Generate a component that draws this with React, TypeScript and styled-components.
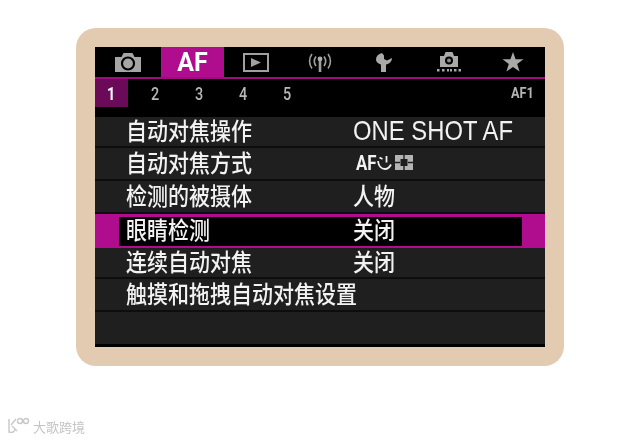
import React from "react";
import styled, { createGlobalStyle } from "styled-components";

const Global = createGlobalStyle`
  html, body { margin: 0; padding: 0; background: #fff; }
  body { width: 640px; height: 440px; overflow: hidden; font-family: "Noto Sans CJK SC", "Noto Sans", sans-serif; }
`;
const Page = styled.div`
  position: relative;
  width: 640px;
  height: 440px;
  padding: 28px 76px 0;
  box-sizing: border-box;
`;
const Card = styled.div`
  width: 488px;
  height: 338px;
  padding: 19px;
  box-sizing: border-box;
  background: #e2cbb0;
  border-radius: 20px;
`;
const Screen = styled.div`
  width: 450px;
  height: 300px;
  background: #000;
  display: flex;
  flex-direction: column;
  filter: blur(0.45px);
`;
const Tabs = styled.div`
  display: grid;
  grid-template-columns: 66px 63px 64px 64px 64px 65px 64px;
  height: 30px;
  flex: none;
`;
const Tab = styled.div<{ $active?: boolean }>`
  display: flex;
  align-items: center;
  justify-content: center;
  background: ${(p) => (p.$active ? "#b00d8e" : "transparent")};
  color: #fff;
  font: 700 25px "Roboto", sans-serif;
`;
const Rule = styled.div`
  height: 2px;
  flex: none;
  background: #a00c80;
`;
const SubBar = styled.div`
  display: flex;
  align-items: flex-start;
  height: 38px;
  flex: none;
  font: 700 18px "Roboto", sans-serif;
  color: #bdbdbd;
`;
const SubCell = styled.div<{ $active?: boolean }>`
  width: 44px;
  height: 28px;
  display: flex;
  align-items: center;
  justify-content: center;
  flex: none;
  background: ${(p) => (p.$active ? "#6a0a58" : "transparent")};
  color: ${(p) => (p.$active ? "#fff" : "#b8b8b8")};
  font-weight: ${(p) => (p.$active ? 700 : 500)};
  ${(p) => p.$active && "width: 33px; margin-right: 5px;"}
`;
const Digit = styled.span`
  display: inline-block;
  transform: scaleX(0.8);
`;
const SubTag = styled.div`
  margin-left: auto;
  margin-right: 11px;
  font: 700 15px/28px "Roboto", sans-serif;
  color: #b5b5b5;
  transform: scaleX(0.85);
  transform-origin: right center;
`;
const List = styled.div`
  flex: 1;
  display: flex;
  flex-direction: column;
`;
const Row = styled.div<{ $h: number; $selected?: boolean; $last?: boolean; $up?: number }>`
  height: ${(p) => p.$h}px;
  box-sizing: border-box;
  flex: none;
  display: flex;
  align-items: center;
  padding-left: 31px;
  padding-bottom: ${(p) => p.$up ?? 0}px;
  background: ${(p) => (p.$selected ? "#000" : "#1f1f1f")};
  border-bottom: ${(p) => (p.$selected || p.$last ? "none" : "2px solid #0d0d0d")};
  color: #f2f2f2;
  font-size: 24px;
  font-weight: 500;
  line-height: 0.95;
  ${(p) =>
    p.$selected &&
    `
    border: solid #b00d8e;
    border-width: 3px 23px 2px 24px;
    padding-left: 7px;
  `}
`;
const LabelSlot = styled.span`
  width: 227px;
  flex: none;
`;
const Squeezed = styled.span`
  display: inline-block;
  white-space: nowrap;
  transform: scaleX(0.875);
  transform-origin: left center;
`;
const Latin = styled(Squeezed)`
  font: 400 28px/1 "Liberation Sans", sans-serif;
  letter-spacing: 0.05px;
  transform: scaleX(0.85);
`;
const IconValue = styled.span`
  display: inline-flex;
  align-items: center;
`;
const AfText = styled.span`
  display: inline-block;
  width: 19px;
  margin-left: 3px;
  margin-right: 2px;
  font: 700 21px "Roboto", sans-serif;
  transform: scaleX(0.8);
  transform-origin: left center;
`;
const BottomFill = styled.div`
  flex: 1;
  background: #000;
`;
const Watermark = styled.div`
  position: absolute;
  left: 7px;
  top: 417px;
  display: flex;
  align-items: center;
  gap: 3px;
  color: #c4c4c4;
  font-size: 13px;
  line-height: 1;
  filter: blur(0.7px);
`;

const Camera = () => (
  <svg width="28" height="19" viewBox="0 0 28 19">
    <path fill="#a6a6a6" d="M1 4h6.500l2-4h9l2 4H27v15H1z" />
    <circle cx="14" cy="10.500" r="6" fill="none" stroke="#000" strokeWidth="2.200" />
  </svg>
);
const Play = () => (
  <svg width="26" height="20" viewBox="0 0 26 20">
    <rect x="1" y="2" width="24" height="17" fill="none" stroke="#a0a0a0" strokeWidth="2" />
    <path fill="#a0a0a0" d="M8 6l10 4.500-10 4.500z" />
  </svg>
);
const Wireless = () => (
  <svg width="24" height="19" viewBox="0 0 24 19" fill="none" stroke="#a0a0a0" strokeWidth="1.600">
    <path d="M8 3.500a8 8 0 0 0 0 9.500M4 1a12 12 0 0 0 0 14.500M16 3.500a8 8 0 0 1 0 9.500M20 1a12 12 0 0 1 0 14.500" />
    <circle cx="12" cy="6" r="2.400" fill="#b0b0b0" stroke="none" />
    <path d="M12 7v12" strokeWidth="2.600" />
  </svg>
);
const Wrench = () => (
  <svg width="16" height="19" viewBox="0 0 16 19">
    <path fill="#a9a9a9" d="M6 0C2 1 0 3.500 0 6.500 0 9 2.500 11 5 11.500V19h5v-7.500c3-.5 6-3 6-6.500l-5 2.500L8 6V2.500z" />
  </svg>
);
const CameraDots = () => (
  <svg width="24" height="20" viewBox="0 0 24 20">
    <path fill="#a9a9a9" d="M3 4h4l1.500-4h7L17 4h4v11H3z" />
    <circle cx="12" cy="8.500" r="4" fill="#000" />
    <circle cx="12" cy="8.500" r="2" fill="#8a8a8a" />
    <g fill="#a9a9a9">
      <rect x="0" y="17" width="2.500" height="2.500" />
      <rect x="5" y="17" width="2.500" height="2.500" />
      <rect x="10" y="17" width="2" height="2.500" />
      <rect x="13" y="17" width="2" height="2.500" />
      <rect x="17" y="17" width="2.500" height="2.500" />
      <rect x="21.500" y="17" width="2.500" height="2.500" />
    </g>
  </svg>
);
const Star = () => (
  <svg width="22" height="20" viewBox="0 0 22 20">
    <path fill="#a9a9a9" d="M11 0l2.600 7.300H21.500l-6.300 4.700 2.400 7.600L11 15l-6.600 4.600 2.400-7.600L.5 7.300h7.900z" />
  </svg>
);
const Face = () => (
  <svg width="15" height="15" viewBox="0 0 15 15" fill="none" stroke="#efefef" strokeWidth="1.800">
    <path d="M1 6c.5 5 3.500 8 7 8 2.500 0 4.500-1.500 6-4.500" />
    <path d="M2.500 2.500l3 1.500M9.500 1v6.500" />
  </svg>
);
const Tracking = () => (
  <svg width="18" height="15" viewBox="0 0 18 15" style={{ marginLeft: 3 }}>
    <rect x="0" y="0" width="18" height="15" fill="#b4b4b4" />
    <path fill="none" stroke="#1f1f1f" strokeWidth="1.400" d="M9 0v4M9 11v4M0 7.500h5M13 7.500h5" />
    <rect x="5.500" y="4" width="7" height="7" fill="#1f1f1f" />
  </svg>
);
const Logo = () => (
  <svg width="23" height="18" viewBox="0 0 23 18" fill="none" stroke="#c8c8c8" strokeWidth="1.400">
    <path d="M2 2v13c3 1 6 0 6-3M4 8l5-6M5 9l5 5" />
    <circle cx="13" cy="4" r="2.500" />
    <circle cx="19" cy="4" r="2.500" />
  </svg>
);

const rows: { label: string; value: React.ReactNode; h: number; selected?: boolean; last?: boolean; up?: number }[] = [
  { label: "自动对焦操作", value: <Latin>ONE SHOT AF</Latin>, h: 31, up: 2 },
  {
    label: "自动对焦方式",
    value: (
      <IconValue>
        <AfText>AF</AfText>
        <Face />
        <Tracking />
      </IconValue>
    ),
    h: 33,
    up: 2,
  },
  { label: "检测的被摄体", value: <Squeezed>人物</Squeezed>, h: 33, up: 2 },
  { label: "眼睛检测", value: <Squeezed>关闭</Squeezed>, h: 34, selected: true, up: 5 },
  { label: "连续自动对焦", value: <Squeezed>关闭</Squeezed>, h: 31, up: 2 },
  { label: "触摸和拖拽自动对焦设置", value: null, h: 33, up: 2 },
  { label: "", value: null, h: 32, last: true },
];

export default function App() {
  return (
    <Page>
      <Global />
      <Card>
        <Screen>
          <Tabs>
            <Tab><Camera /></Tab>
            <Tab $active>AF</Tab>
            <Tab><Play /></Tab>
            <Tab><Wireless /></Tab>
            <Tab><Wrench /></Tab>
            <Tab><CameraDots /></Tab>
            <Tab><Star /></Tab>
          </Tabs>
          <Rule />
          <SubBar>
            <SubCell $active><Digit>1</Digit></SubCell>
            <SubCell><Digit>2</Digit></SubCell>
            <SubCell><Digit>3</Digit></SubCell>
            <SubCell><Digit>4</Digit></SubCell>
            <SubCell><Digit>5</Digit></SubCell>
            <SubTag>AF1</SubTag>
          </SubBar>
          <List>
            {rows.map((r, i) => (
              <Row key={i} $h={r.h} $selected={r.selected} $last={r.last} $up={r.up}>
                <LabelSlot>
                  <Squeezed>{r.label}</Squeezed>
                </LabelSlot>
                {r.value}
              </Row>
            ))}
            <BottomFill />
          </List>
        </Screen>
      </Card>
      <Watermark>
        <Logo />
        大歌跨境
      </Watermark>
    </Page>
  );
}
